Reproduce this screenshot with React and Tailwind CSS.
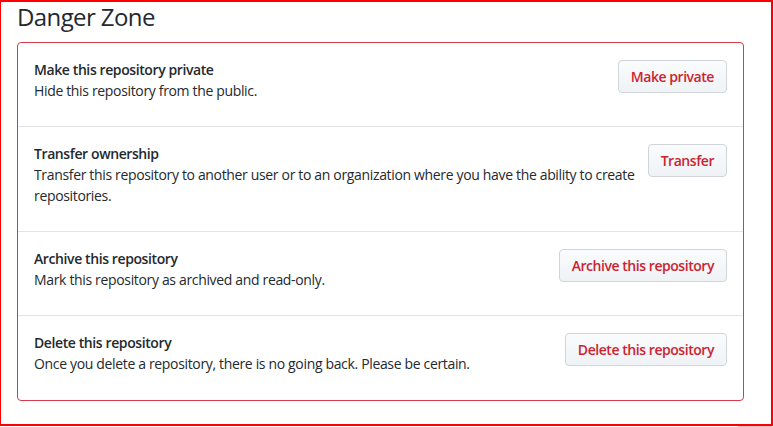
import React from "react";

const rows = [
  {
    title: "Make this repository private",
    desc: "Hide this repository from the public.",
    action: "Make private",
  },
  {
    title: "Transfer ownership",
    desc: "Transfer this repository to another user or to an organization where you have the ability to create repositories.",
    action: "Transfer",
  },
  {
    title: "Archive this repository",
    desc: "Mark this repository as archived and read-only.",
    action: "Archive this repository",
  },
  {
    title: "Delete this repository",
    desc: "Once you delete a repository, there is no going back. Please be certain.",
    action: "Delete this repository",
  },
];

const DangerRow = ({ title, desc, action, last }) => (
  <div
    className={`flex items-start justify-between px-4 pt-4 ${
      last ? "pb-[26px]" : "pb-[25px] border-b border-[#e1e4e8]"
    }`}
  >
    <div className="flex-1 text-[14px] leading-[21px] text-[#24292e]">
      <div className="font-semibold tracking-[-0.4px]">{title}</div>
      <div className="tracking-[-0.34px]">{desc}</div>
    </div>
    <button
      type="button"
      className="mt-px shrink-0 whitespace-nowrap rounded-[4px] border border-[#d1d5da] bg-gradient-to-b from-[#fafbfc] to-[#eff3f6] px-3 py-[5px] text-[14px] font-semibold leading-[21px] tracking-[-0.45px] text-[#cb2431]"
    >
      {action}
    </button>
  </div>
);

export default function App() {
  return (
    <div
      className="relative h-[427px] w-[773px] bg-white"
      style={{ fontFamily: '"Open Sans", "Noto Sans", sans-serif' }}
    >
      <div className="h-[426px] w-[773px] border-t-2 border-l border-r-2 border-b-2 border-[#ff0000] pl-4 pr-[27px]">
        <h2 className="text-[24px] font-normal leading-[30px] tracking-[-0.6px] text-[#24292e]">
          Danger Zone
        </h2>
        <div className="mt-[10px] rounded-[4px] border border-[#d73a49]">
          {rows.map((r, i) => (
            <DangerRow key={r.title} {...r} last={i === rows.length - 1} />
          ))}
        </div>
      </div>
      <div className="absolute bottom-0 right-[1px] h-[1px] w-[34px] bg-[#c8c8c8]" />
    </div>
  );
}
